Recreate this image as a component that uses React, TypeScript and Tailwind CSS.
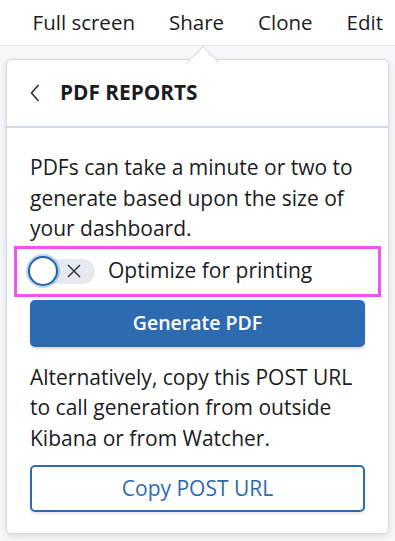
import { useState } from "react";

const font = { fontFamily: '"Open Sans", "Noto Sans", sans-serif' };

const navItems = ["Full screen", "Share", "Clone", "Edit"];

export default function App() {
  const [printOpt, setPrintOpt] = useState(false);

  return (
    <div
      className="relative w-[395px] h-[541px] overflow-hidden bg-[#f5f7fa] text-[#1a1c21]"
      style={font}
    >
      {/* Top menu */}
      <nav className="h-[46px] bg-white border-b border-[#e3e6ec] flex items-start justify-end gap-[34px] pr-[12px] pt-[5px] text-[20.5px]">
        {navItems.map((item) => (
          <span key={item} className="leading-[34px]">
            {item}
          </span>
        ))}
      </nav>

      {/* Share popover */}
      <div className="relative mx-[6px] mt-[13px] bg-white border border-[#d3dae6] rounded-[5px] shadow-[0_2px_6px_rgba(0,0,0,0.12)]">
        {/* arrow */}
        <div className="absolute -top-[9px] left-[184px] w-[24px] h-[24px] rotate-45 bg-white border-l border-t border-[#d3dae6]" />

        <div className="relative flex items-center h-[68px] px-[23px] border-b-2 border-[#d3dae6]">
          <svg width="10" height="18" viewBox="0 0 10 18" className="mr-[20px]">
            <path d="M8.5 1 1.5 9l7 8" fill="none" stroke="#1a1c21" strokeWidth="1.4" />
          </svg>
          <span className="font-bold text-[20.8px]">PDF REPORTS</span>
        </div>

        <div className="px-[23px] pt-[24px] pb-[21px]">
          <p className="text-[21px] leading-[30.5px]">
            PDFs can take a minute or two to generate based upon the size of your dashboard.
          </p>

          <div className="-mx-[16px] mt-[2px] h-[51px] border-[3px] border-[#ee55ee] flex items-center pl-[11px]">
            <button
              onClick={() => setPrintOpt(!printOpt)}
              className="relative w-[67px] h-[25px] rounded-full bg-[#e6e9ef]"
            >
              <span className="absolute left-0 top-[-3px] w-[30px] h-[30px] rounded-full bg-white border-[2.5px] border-[#1f64ad] shadow-[0_0_0_2px_rgba(31,100,173,0.28)]" />
              <svg width="16" height="16" viewBox="0 0 16 16" className="absolute left-[38px] top-[4px]">
                <path d="M2 2l12 12M14 2 2 14" stroke="#343741" strokeWidth="1.5" />
              </svg>
            </button>
            <span className="ml-[13px] text-[21px]">Optimize for printing</span>
          </div>

          <button className="mt-[3px] w-full h-[47px] rounded-[5px] bg-[#2d6bb0] text-white text-[19.5px] font-semibold shadow-[0_2px_3px_rgba(0,0,0,0.15)]">
            Generate PDF
          </button>

          <p className="mt-[15px] text-[21px] leading-[30.5px]">
            Alternatively, copy this POST URL to call generation from outside Kibana or from Watcher.
          </p>

          <button className="mt-[12px] w-full h-[47px] rounded-[5px] border-2 border-[#2d6bb0] text-[#2d6bb0] text-[21px] shadow-[0_2px_3px_rgba(0,0,0,0.1)]">
            Copy POST URL
          </button>
        </div>
      </div>
    </div>
  );
}
